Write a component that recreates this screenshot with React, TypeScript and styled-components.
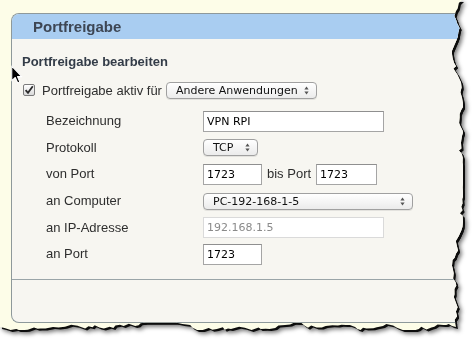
import React from "react";
import styled, { createGlobalStyle } from "styled-components";

// Jagged "torn paper" outline for the screenshot frame
const makeTornEdge = () => {
  let seed = 11;
  const rnd = () => {
    seed = (seed * 9301 + 49297) % 233280;
    return seed / 233280;
  };
  const pts: string[] = ["0px 0px", "462px 0px"];
  let x = 458;
  for (let y = 3; y < 321; y += 2 + rnd() * 4) {
    x = Math.min(463, Math.max(452, x + (rnd() - 0.5) * 6));
    pts.push(`${x.toFixed(1)}px ${y.toFixed(1)}px`);
  }
  pts.push("456px 327px");
  let y = 326;
  for (let px = 452; px > 3; px -= 2 + rnd() * 5) {
    y = Math.min(330, Math.max(322.5, y + (rnd() - 0.5) * 5));
    pts.push(`${px.toFixed(1)}px ${y.toFixed(1)}px`);
  }
  pts.push("0px 327px");
  return `polygon(${pts.join(", ")})`;
};

const TORN_EDGE = makeTornEdge();

const GlobalStyle = createGlobalStyle`
  html, body {
    margin: 0;
    padding: 0;
    background: #ffffff;
  }
  body {
    font-family: "Liberation Sans", Arial, sans-serif;
  }
`;

const Shadow = styled.div`
  width: 475px;
  height: 344px;
  filter: drop-shadow(2px 2px 0.5px rgba(0, 0, 0, 0.9))
    drop-shadow(2px 2px 2px rgba(0, 0, 0, 0.55));
`;

const Paper = styled.div`
  position: relative;
  width: 470px;
  height: 334px;
  box-sizing: border-box;
  padding: 13px 0 0 11px;
  background: #fdfde8;
  clip-path: ${TORN_EDGE};
  overflow: hidden;
`;

const Panel = styled.div`
  width: 470px;
  height: 310px;
  display: flex;
  flex-direction: column;
  box-sizing: border-box;
  border: 1px solid #8e999b;
  border-right: none;
  border-radius: 8px 0 0 8px;
  background: #f7f6f1;
  overflow: hidden;
`;

const Header = styled.div`
  height: 25px;
  line-height: 25px;
  padding-left: 21px;
  background: #a9cdf1;
  font-size: 15px;
  font-weight: bold;
  color: #3d4654;
`;

const Body = styled.div`
  padding: 15px 0 11px 10px;
`;

const Heading = styled.div`
  height: 16px;
  line-height: 16px;
  font-size: 13px;
  font-weight: bold;
  color: #333c48;
`;

const CheckRow = styled.div`
  display: flex;
  align-items: center;
  height: 18px;
  margin-top: 11px;
  padding-left: 1px;
  font-size: 13px;
  color: #2e2e2e;
`;

const CheckBox = styled.span`
  width: 12px;
  height: 12px;
  box-sizing: border-box;
  margin-right: 7px;
  border: 1px solid #7b7b7b;
  border-radius: 2px;
  background: linear-gradient(#ffffff, #d9d9d9);
  display: flex;
  align-items: center;
  justify-content: center;
`;

const CheckLabel = styled.span`
  margin-right: 4px;
`;

const Form = styled.div`
  display: grid;
  grid-template-columns: 157px auto;
  grid-auto-rows: 26.6px;
  align-items: center;
  margin-top: 9px;
  padding-left: 24px;
  font-size: 13px;
  color: #2e2e2e;
`;

const Label = styled.span`
  line-height: 16px;
`;

const Field = styled.div`
  display: flex;
  align-items: center;
  gap: 5px;
`;

const TextInput = styled.input<{ $w: number }>`
  width: ${(p) => p.$w}px;
  height: 21px;
  box-sizing: border-box;
  margin: 0;
  padding: 0 3px;
  border: 1px solid #a5a5a5;
  border-top-color: #8f8f8f;
  border-radius: 0;
  background: #ffffff;
  font-family: "DejaVu Sans", "Liberation Sans", sans-serif;
  font-size: 11px;
  color: #000000;
  outline: none;

  &:disabled {
    border-color: #dadada;
    color: #8a8a8a;
    background: #ffffff;
  }
`;

const SelectBox = styled.div<{ $w: number }>`
  width: ${(p) => p.$w}px;
  height: 17px;
  box-sizing: border-box;
  display: flex;
  align-items: center;
  justify-content: space-between;
  padding: 0 7px 0 9px;
  border: 1px solid #a0a0a0;
  border-radius: 4px;
  background: linear-gradient(#ffffff, #ebebeb);
  box-shadow: 0 1px 0 rgba(0, 0, 0, 0.08);
  font-family: "DejaVu Sans", "Liberation Sans", sans-serif;
  font-size: 11px;
  color: #111111;
  white-space: nowrap;
`;

const Footer = styled.div`
  flex: 1;
  border-top: 1px solid #9aa5a8;
`;

const Cursor = styled.svg`
  position: absolute;
  left: 10px;
  top: 65px;
`;

const Arrows = () => (
  <svg width="5" height="9" viewBox="0 0 5 9">
    <path d="M2.5 0.5 L4.6 3.4 H0.4 Z" fill="#555" />
    <path d="M2.5 8.5 L4.6 5.6 H0.4 Z" fill="#555" />
  </svg>
);

const Select: React.FC<{ w: number; value: string }> = ({ w, value }) => (
  <SelectBox $w={w}>
    <span>{value}</span>
    <Arrows />
  </SelectBox>
);

const App: React.FC = () => {
  return (
    <>
      <GlobalStyle />
      <Shadow>
        <Paper>
          <Panel>
            <Header>Portfreigabe</Header>
            <Body>
              <Heading>Portfreigabe bearbeiten</Heading>
              <CheckRow>
                <CheckBox>
                  <svg width="10" height="10" viewBox="0 0 10 10">
                    <path
                      d="M1.6 5.2 L4 7.8 L8.8 1.2"
                      fill="none"
                      stroke="#2b2b2b"
                      strokeWidth="1.8"
                    />
                  </svg>
                </CheckBox>
                <CheckLabel>Portfreigabe aktiv für</CheckLabel>
                <Select w={151} value="Andere Anwendungen" />
              </CheckRow>
              <Form>
                <Label>Bezeichnung</Label>
                <Field>
                  <TextInput $w={181} defaultValue="VPN RPI" />
                </Field>
                <Label>Protokoll</Label>
                <Field>
                  <Select w={55} value="TCP" />
                </Field>
                <Label>von Port</Label>
                <Field>
                  <TextInput $w={59} defaultValue="1723" />
                  <Label>bis Port</Label>
                  <TextInput $w={61} defaultValue="1723" />
                </Field>
                <Label>an Computer</Label>
                <Field>
                  <Select w={210} value="PC-192-168-1-5" />
                </Field>
                <Label>an IP-Adresse</Label>
                <Field>
                  <TextInput $w={181} defaultValue="192.168.1.5" disabled />
                </Field>
                <Label>an Port</Label>
                <Field>
                  <TextInput $w={59} defaultValue="1723" />
                </Field>
              </Form>
            </Body>
            <Footer />
          </Panel>
          <Cursor width="13" height="19" viewBox="0 0 12 18">
            <path
              d="M1.5 1 V15 L4.8 11.8 L7.2 17 L9.2 16.1 L6.9 11 H11 Z"
              fill="#000"
              stroke="#fff"
              strokeWidth="1"
              strokeLinejoin="round"
            />
          </Cursor>
        </Paper>
      </Shadow>
    </>
  );
};

export default App;
